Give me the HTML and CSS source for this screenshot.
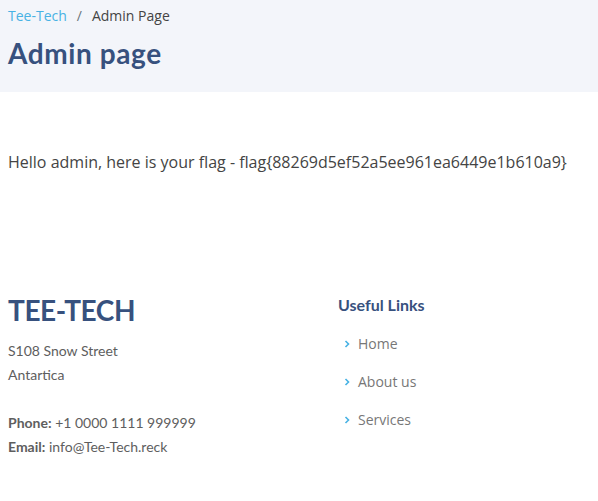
FILE: index.html
```html
<!DOCTYPE html>
<html lang="en">
<head>
<meta charset="utf-8">
<title>Admin page</title>
<link rel="stylesheet" href="styles.css">
</head>
<body>
<section class="breadcrumbs">
  <ol class="crumbs">
    <li><a href="#">Tee-Tech</a></li>
    <li class="sep">/</li>
    <li>Admin Page</li>
  </ol>
  <h2 class="page-title">Admin page</h2>
</section>

<main class="content">
  <p>Hello admin, here is your flag - flag{88269d5ef52a5ee961ea6449e1b610a9}</p>
</main>

<footer class="footer">
  <div class="footer-contact">
    <h3 class="brand">TEE-TECH</h3>
    <p>S108 Snow Street<br>Antartica<br><br><strong>Phone:</strong> +1 0000 1111 999999<br><strong>Email:</strong> info@Tee-Tech.reck</p>
  </div>
  <div class="footer-links">
    <h4>Useful Links</h4>
    <ul>
      <li><svg class="chev" viewBox="0 0 10 10" width="10" height="10"><path d="M3.5 2 L6.5 5 L3.5 8" fill="none" stroke="#47b2e4" stroke-width="1.6"/></svg><a href="#">Home</a></li>
      <li><svg class="chev" viewBox="0 0 10 10" width="10" height="10"><path d="M3.5 2 L6.5 5 L3.5 8" fill="none" stroke="#47b2e4" stroke-width="1.6"/></svg><a href="#">About us</a></li>
      <li><svg class="chev" viewBox="0 0 10 10" width="10" height="10"><path d="M3.5 2 L6.5 5 L3.5 8" fill="none" stroke="#47b2e4" stroke-width="1.6"/></svg><a href="#">Services</a></li>
    </ul>
  </div>
</footer>
</body>
</html>
```

FILE: styles.css
```css
* { box-sizing: border-box; }
html, body { margin: 0; padding: 0; }
body {
  font-family: "Open Sans", sans-serif;
  color: #444444;
  background: #ffffff;
}
a { text-decoration: none; }

.breadcrumbs {
  background: #f3f5fa;
  padding: 5px 8px 0;
  height: 92px;
}
.crumbs {
  list-style: none;
  margin: 0;
  padding: 0 0 10px;
  display: flex;
  font-size: 14px;
  line-height: 21px;
  color: #444444;
}
.crumbs a { color: #47b2e4; }
.crumbs .sep { padding: 0 10px; color: #6c757d; }
.page-title {
  margin: 0;
  font-family: "Lato", sans-serif;
  font-size: 28px;
  font-weight: 700;
  line-height: 34px;
  letter-spacing: 0.6px;
  color: #37517e;
}

.content { padding: 58px 8px 0; height: 199px; }
.content p {
  margin: 0;
  font-size: 16px;
  line-height: 24px;
  color: #444444;
}

.footer {
  display: grid;
  grid-template-columns: 330px 1fr;
  padding: 0 8px;
}
.brand {
  margin: 0 0 10px;
  padding: 2px 0;
  font-family: "Lato", sans-serif;
  font-size: 28px;
  line-height: 34px;
  font-weight: 700;
  letter-spacing: -0.4px;
  color: #37517e;
}
.footer-contact p {
  margin: 0;
  font-family: "Lato", sans-serif;
  font-size: 14px;
  line-height: 24px;
  color: #5e5e5e;
}
.footer-contact strong { font-weight: 700; }
.footer-links h4 {
  margin: 0;
  padding: 4px 0 10px;
  font-family: "Lato", sans-serif;
  font-size: 16px;
  line-height: 20px;
  font-weight: 700;
  color: #37517e;
}
.footer-links ul { list-style: none; margin: 0; padding: 0; }
.footer-links li {
  display: flex;
  align-items: center;
  padding: 8px 0;
  font-size: 14px;
  line-height: 22px;
}
.chev { margin: 0 6px 0 4px; }
.footer-links a { color: #777777; }
```
